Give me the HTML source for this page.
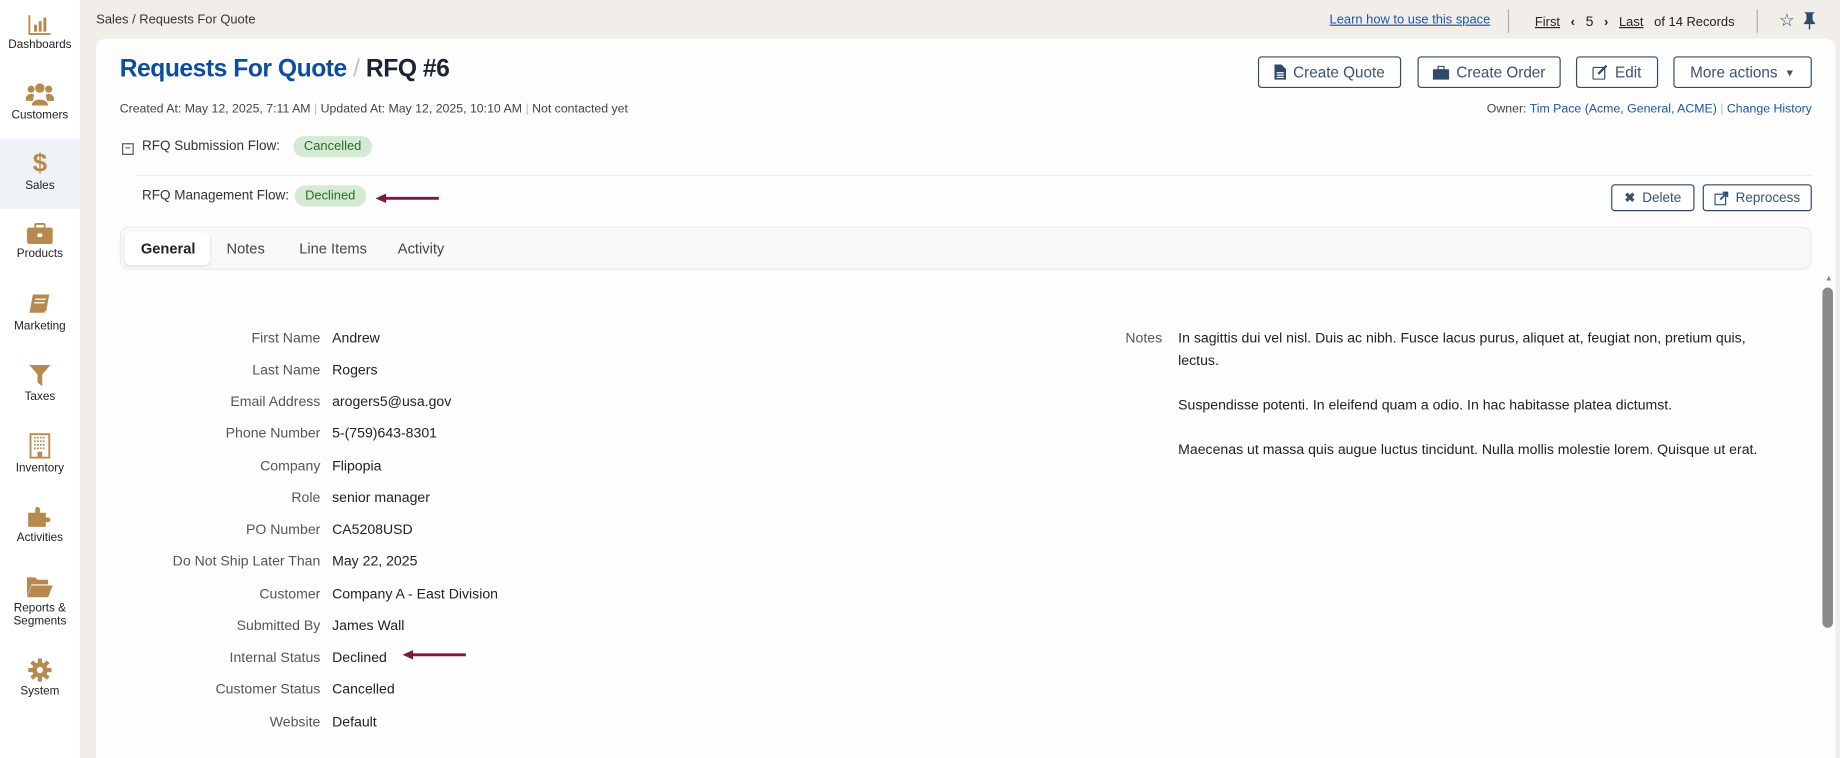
<!DOCTYPE html>
<html><head><meta charset="utf-8"><style>
*{box-sizing:border-box;margin:0;padding:0}
html,body{width:1840px;height:758px;overflow:hidden;background:#f1eee9}
#s{width:1568px;height:646px;transform:scale(1.17347);transform-origin:0 0;position:relative;font-family:"Liberation Sans",sans-serif;color:#222;font-size:12px}
.a{position:absolute}
.side{left:0;top:0;width:68px;height:646px;background:#fff}
.nav{position:absolute;left:0;width:68px;text-align:center;font-size:10px;color:#222}
.nav svg{display:block;margin:0 auto 3px}
.blue{color:#1a57a6}
.btn{position:absolute;border:1px solid #2f4a6b;border-radius:3px;color:#3b5170;font-size:13px;display:flex;align-items:center;justify-content:center;gap:6px;background:#fff}
.sm{font-size:11.5px;border-radius:3px}
.pill{position:absolute;background:#d5ead3;color:#2d6a2a;border-radius:10px;font-size:11px;padding:3px 9px}
.lbl{position:absolute;right:1295px;color:#555;font-size:12px;text-align:right;white-space:nowrap}
.val{position:absolute;left:283px;font-size:12px;color:#222;white-space:nowrap}
</style></head><body><div id="s">
<div class="a side"></div>
<div class="a" style="left:0;top:118px;width:68px;height:60px;background:#eef2f7"></div>
<div class="nav" style="top:12px"><svg width="20" height="18" viewBox="0 0 20 18"><path d="M1 1v16h18" stroke="#b8894f" stroke-width="1.6" fill="none"/><rect x="5" y="9" width="2.5" height="6" fill="#b8894f"/><rect x="9" y="6" width="2.5" height="9" fill="#b8894f"/><rect x="13" y="3" width="2.5" height="12" fill="#b8894f"/></svg>Dashboards</div>
<div class="nav" style="top:70px"><svg width="24" height="20" viewBox="0 0 24 20"><circle cx="12" cy="5" r="4" fill="#b8894f"/><circle cx="4.5" cy="6" r="3" fill="#b8894f"/><circle cx="19.5" cy="6" r="3" fill="#b8894f"/><path d="M5 20c0-7 14-7 14 0z" fill="#b8894f"/><path d="M0 14c0-4 6-5 7-3l-1 5H0zM24 14c0-4-6-5-7-3l1 5h6z" fill="#b8894f"/></svg>Customers</div>
<div class="nav" style="top:127px"><div style="font-size:22px;color:#b8894f;font-weight:bold;line-height:24px;margin-bottom:2px">$</div>Sales</div>
<div class="nav" style="top:190px"><svg width="22" height="18" viewBox="0 0 22 18"><rect x="0" y="4" width="22" height="14" rx="2" fill="#b8894f"/><rect x="7" y="0.8" width="8" height="4" rx="1" fill="none" stroke="#b8894f" stroke-width="1.6"/><rect x="9" y="9" width="4" height="3" fill="#fff"/></svg>Products</div>
<div class="nav" style="top:250px"><svg width="20" height="20" viewBox="0 0 20 20"><path d="M4 1h14l-3 16H1z" fill="#b8894f"/><path d="M6 5h9M5 8h9" stroke="#fff" stroke-width="1"/><path d="M1 17h13l1-2" stroke="#fff" stroke-width="1" fill="none"/></svg>Marketing</div>
<div class="nav" style="top:310px"><svg width="20" height="20" viewBox="0 0 20 20"><path d="M1 1h18l-7 8v10l-4-3V9z" fill="#b8894f"/></svg>Taxes</div>
<div class="nav" style="top:369px"><svg width="18" height="22" viewBox="0 0 18 22"><rect x="1" y="1" width="16" height="20" fill="#fff" stroke="#b8894f" stroke-width="1.6"/><path d="M4 4h10M4 7h10M4 10h10M4 13h10" stroke="#b8894f" stroke-width="1.4" stroke-dasharray="1.5 1"/><rect x="7" y="16" width="4" height="5" fill="#b8894f"/></svg>Inventory</div>
<div class="nav" style="top:430px"><svg width="22" height="20" viewBox="0 0 22 20"><path d="M1 7h6V4a2 2 0 1 1 4 0v3h5v4h2a2 2 0 1 1 0 4h-2v4H1z" fill="#b8894f"/></svg>Activities</div>
<div class="nav" style="top:490px"><svg width="24" height="20" viewBox="0 0 24 20"><path d="M1 2h7l2 2h9v4H5L1 18z" fill="#b8894f"/><path d="M5 9h18l-4 10H1z" fill="#b8894f"/></svg>Reports &amp;<br>Segments</div>
<div class="nav" style="top:561px"><svg width="20" height="20" viewBox="0 0 20 20"><circle cx="10" cy="10" r="6.5" fill="#b8894f"/><path d="M10 0v20M0 10h20M3 3l14 14M17 3L3 17" stroke="#b8894f" stroke-width="3.5"/><circle cx="10" cy="10" r="2.7" fill="#fff"/></svg>System</div>

<div class="a" style="left:82px;top:11px;font-size:11px;color:#333">Sales / Requests For Quote</div>
<div class="a" style="left:1133px;top:11px;font-size:11px;color:#1a57a6;text-decoration:underline">Learn how to use this space</div>
<div class="a" style="left:1285px;top:8px;width:1px;height:20px;background:#aab"></div>
<div class="a" style="left:1308px;top:11px;font-size:11px;color:#222"><u>First</u> <b style="margin:0 6px">‹</b> <span style="font-size:12px">5</span> <b style="margin:0 6px">›</b> <u>Last</u>&nbsp;&nbsp; of 14 Records</div>
<div class="a" style="left:1497px;top:8px;width:1px;height:20px;background:#aab"></div>
<div class="a" style="left:1516px;top:8px;font-size:15px;color:#2f4a6b">☆</div>
<svg class="a" style="left:1518px;top:10px" width="50" height="16"><path d="M21 1h6l-1 1v5l2 3h-8l2-3V2z M24 10v5" fill="#2f4a6b" stroke="#2f4a6b" stroke-width="1.2"/></svg>

<div class="a" style="left:82px;top:33px;width:1482px;height:620px;background:#fdfdfd;border-radius:8px"></div>
<div class="a" style="left:102px;top:47px;font-size:21px;font-weight:bold;letter-spacing:-0.4px"><span style="color:#0d4c9e">Requests For Quote</span> <span style="color:#c0c4cc;font-weight:normal">/</span> <span style="color:#1c2230">RFQ #6</span></div>
<div class="a" style="left:102px;top:87px;font-size:10.5px;color:#444">Created At: May 12, 2025, 7:11 AM <span style="color:#bbb">|</span> Updated At: May 12, 2025, 10:10 AM <span style="color:#bbb">|</span> Not contacted yet</div>
<div class="a" style="right:24px;top:87px;font-size:10.5px;color:#444">Owner: <span class="blue">Tim Pace (Acme, General, ACME)</span> <span style="color:#bbb">|</span> <span class="blue">Change History</span></div>

<div class="btn" style="left:1072px;top:48px;width:122px;height:27px"><svg width="10" height="13"><path d="M0 0h6l4 4v9H0z" fill="#2f4a6b"/><path d="M2 7h6M2 9h6M2 11h6" stroke="#fff"/></svg>Create Quote</div>
<div class="btn" style="left:1208px;top:48px;width:122px;height:27px"><svg width="14" height="12"><rect y="3" width="14" height="9" rx="1" fill="#2f4a6b"/><rect x="4.5" y="0.5" width="5" height="3" fill="none" stroke="#2f4a6b"/></svg>Create Order</div>
<div class="btn" style="left:1343px;top:48px;width:70px;height:27px"><svg width="13" height="13"><rect x="0.5" y="2.5" width="10" height="10" rx="1" fill="none" stroke="#2f4a6b"/><path d="M5 8l7-7" stroke="#2f4a6b" stroke-width="2"/></svg>Edit</div>
<div class="btn" style="left:1426px;top:48px;width:118px;height:27px">More actions <span style="font-size:9px">▼</span></div>

<div class="a" style="left:104px;top:122px;width:10px;height:10px;border:1px solid #555;font-size:9px;line-height:7px;text-align:center">−</div>
<div class="a" style="left:121px;top:119px;font-size:11.5px;color:#333">RFQ Submission Flow:</div>
<div class="pill" style="left:250px;top:116px">Cancelled</div>
<div class="a" style="left:115px;top:149px;width:1429px;height:1px;background:#eceef1"></div>
<div class="a" style="left:121px;top:161px;font-size:11.5px;color:#333">RFQ Management Flow:</div>
<div class="pill" style="left:251px;top:158px">Declined</div>
<svg class="a" style="left:320px;top:163px" width="60" height="12"><path d="M6 6h48" stroke="#7a1a3c" stroke-width="2.5"/><path d="M0 6l9-4v8z" fill="#7a1a3c"/></svg>
<div class="btn sm" style="left:1373px;top:157px;width:71px;height:23px"><b style="font-size:11px">✖</b> Delete</div>
<div class="btn sm" style="left:1451px;top:157px;width:93px;height:23px"><svg width="12" height="12"><rect x="0.5" y="2.5" width="9" height="9" fill="none" stroke="#2f4a6b"/><path d="M5 7l6-6M7 1h4v4" stroke="#2f4a6b" stroke-width="1.5" fill="none"/></svg> Reprocess</div>

<div class="a" style="left:102px;top:193px;width:1442px;height:37px;background:#f7f8fa;border:1px solid #e8eaee;border-radius:8px"></div>
<div class="a" style="left:106px;top:198px;width:73px;height:28px;background:#fff;border-radius:5px;box-shadow:0 1px 2px rgba(0,0,0,.12)"></div>
<div class="a" style="left:120px;top:205px;font-size:12.5px;color:#222;font-weight:bold">General</div>
<div class="a" style="left:193px;top:205px;font-size:12.5px;color:#444">Notes</div>
<div class="a" style="left:255px;top:205px;font-size:12.5px;color:#444">Line Items</div>
<div class="a" style="left:339px;top:205px;font-size:12.5px;color:#444">Activity</div>

<div class="lbl" style="top:281px">First Name</div><div class="val" style="top:281px">Andrew</div>
<div class="lbl" style="top:308px">Last Name</div><div class="val" style="top:308px">Rogers</div>
<div class="lbl" style="top:335px">Email Address</div><div class="val blue" style="top:335px">arogers5@usa.gov</div>
<div class="lbl" style="top:362px">Phone Number</div><div class="val" style="top:362px">5-(759)643-8301</div>
<div class="lbl" style="top:390px">Company</div><div class="val" style="top:390px">Flipopia</div>
<div class="lbl" style="top:417px">Role</div><div class="val" style="top:417px">senior manager</div>
<div class="lbl" style="top:444px">PO Number</div><div class="val" style="top:444px">CA5208USD</div>
<div class="lbl" style="top:471px">Do Not Ship Later Than</div><div class="val" style="top:471px">May 22, 2025</div>
<div class="lbl" style="top:499px">Customer</div><div class="val blue" style="top:499px">Company A - East Division</div>
<div class="lbl" style="top:526px">Submitted By</div><div class="val blue" style="top:526px">James Wall</div>
<div class="lbl" style="top:553px">Internal Status</div><div class="val" style="top:553px">Declined</div>
<svg class="a" style="left:343px;top:552px" width="60" height="12"><path d="M6 6h48" stroke="#7a1a3c" stroke-width="2.5"/><path d="M0 6l9-4v8z" fill="#7a1a3c"/></svg>
<div class="lbl" style="top:580px">Customer Status</div><div class="val" style="top:580px">Cancelled</div>
<div class="lbl" style="top:608px">Website</div><div class="val" style="top:608px">Default</div>

<div class="a" style="left:959px;top:281px;font-size:12px;color:#555">Notes</div>
<div class="a" style="left:1004px;top:279px;width:520px;font-size:12px;line-height:19px;color:#222">In sagittis dui vel nisl. Duis ac nibh. Fusce lacus purus, aliquet at, feugiat non, pretium quis, lectus.<br><br>Suspendisse potenti. In eleifend quam a odio. In hac habitasse platea dictumst.<br><br>Maecenas ut massa quis augue luctus tincidunt. Nulla mollis molestie lorem. Quisque ut erat.</div>

<div class="a" style="left:1555px;top:234px;font-size:7px;color:#888">▲</div>
<div class="a" style="left:1553px;top:245px;width:9px;height:290px;background:#8a8a8a;border-radius:5px"></div>
</div></body></html>
